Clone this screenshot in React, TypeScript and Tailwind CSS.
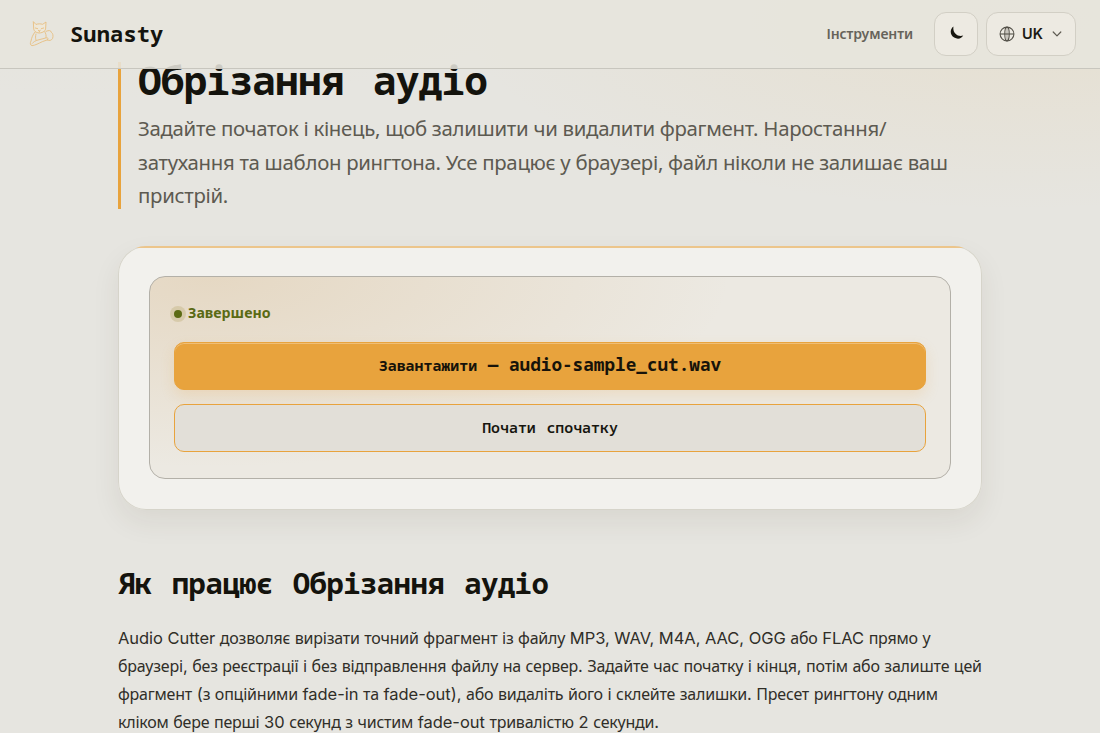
import React from "react";

/* Sets Cyrillic words in Noto Sans inside Inter text. */
function Mixed({ text }: { text: string }) {
  return (
    <>
      {text.split(/([\u0400-\u04ff]+)/).map((part, i) =>
        i % 2 ? (
          <span key={i} className="font-['Noto_Sans',sans-serif] text-[16px] tracking-[-0.22px]">
            {part}
          </span>
        ) : (
          part
        ),
      )}
    </>
  );
}

function CatLogo() {
  return (
    <svg width="28" height="30" viewBox="0 0 84 90" fill="none" stroke="#e8a33d" strokeWidth="2.6" strokeLinecap="round" strokeLinejoin="round" className="opacity-60">
      <path d="M16 9 L17 27 C17 35 22 41 34 42 C46 41 53 35 53 27 L54 9 L44 16 C38 14 30 14 25 16 Z" fill="#f4ead8" />
      <path d="M22 27 l7 2 M47 27 l-7 2 M31 34 l3 2 3-2 M34 36 v3" />
      <path d="M21 39 C14 48 11 56 9 66 C6 72 6 78 12 80 C22 79 32 73 43 68 L57 63 C64 61 60 55 53 57 L30 63 C22 65 16 69 13 73" />
      <path d="M50 38 C54 43 55 50 54 56 M54 37 C63 33 69 34 70 40 C75 43 76 50 74 58 C70 65 64 66 58 63" />
      <path d="M24 45 C22 52 22 57 24 63" />
    </svg>
  );
}

function Globe() {
  return (
    <svg width="16" height="16" viewBox="0 0 16 16" fill="none" stroke="#55524a" strokeWidth="1.1">
      <circle cx="8" cy="8" r="6.9" />
      <path d="M1 8h14" />
      <ellipse cx="8" cy="8" rx="2.2" ry="6.9" />
      <path d="M8 1v14" strokeWidth="0.5" />
    </svg>
  );
}

function Moon() {
  return (
    <svg width="14" height="14" viewBox="0 0 14 14">
      <path d="M3.5 0.5 C-0.6 3.4 0 9.4 4.2 11.6 C7.5 13.6 11.6 12.8 13.2 9.6 C8.2 11.6 2.2 7.2 3.5 0.5 Z" fill="#17160f" />
    </svg>
  );
}

function Chevron() {
  return (
    <svg width="10" height="6" viewBox="0 0 10 6" fill="none" stroke="#5d5a51" strokeWidth="1.2" strokeLinecap="round" strokeLinejoin="round" className="ml-[9px]">
      <path d="M1.2 1 L5 4.8 L8.8 1" />
    </svg>
  );
}

function Header() {
  return (
    <header className="absolute inset-x-0 top-0 z-10 flex h-[69px] items-center justify-between border-b border-[#c8c6be] bg-[#e7e5dd]/88 pr-6 pl-7">
      <div className="flex items-center gap-[14px]">
        <CatLogo />
        <span className="pb-[3px] font-['Noto_Sans_Mono','DejaVu_Sans_Mono',monospace] text-[22px] leading-7 font-bold tracking-[0.15px] text-[#14130d]">Sunasty</span>
      </div>
      <div className="flex items-center">
        <span className="mr-[21px] pb-[2px] font-['Noto_Sans',sans-serif] text-[14px] font-semibold tracking-[-0.1px] text-[#66635a]">Інструменти</span>
        <button className="mr-2 flex h-11 w-11 items-center justify-center rounded-xl border border-[#d2cfc5] bg-[#edeae2] pb-[2px] pl-[2px]">
          <Moon />
        </button>
        <button className="flex h-11 w-[90px] items-center rounded-xl border border-[#d2cfc5] bg-[#edeae2] pl-3">
          <Globe />
          <span className="ml-[7px] font-['Inter',sans-serif] text-[14.5px] font-semibold text-[#1b1a14]">UK</span>
          <Chevron />
        </button>
      </div>
    </header>
  );
}

export default function App() {
  return (
    <div className="relative h-[733px] overflow-hidden bg-[#e6e5e0] bg-[radial-gradient(ellipse_560px_190px_at_1020px_20px,rgba(228,190,120,0.15),transparent),radial-gradient(ellipse_400px_100px_at_150px_0px,rgba(228,220,170,0.08),transparent)]">
      <Header />
      <main className="mx-auto w-[864px] pt-[62px]">
        <div className="h-[147px] border-l-3 border-[#e8a33d] pl-[17px]">
          <h1 className="h-[50px] font-['Noto_Sans_Mono','DejaVu_Sans_Mono',monospace] text-[39.5px] leading-[36px] font-bold tracking-[-0.85px] [word-spacing:6.4px] text-[#14130d]">Обрізання аудіо</h1>
          <p className="font-['Noto_Sans',sans-serif] text-[20.4px] leading-[33.6px] tracking-[-0.3px] whitespace-nowrap text-[#5d5a51]">
            Задайте початок і кінець, щоб залишити чи видалити фрагмент. Наростання/
            <br />
            затухання та шаблон рингтона. Усе працює у браузері, файл ніколи не залишає ваш
            <br />
            пристрій.
          </p>
        </div>

        <section className="relative mt-[37px] h-[264px] overflow-hidden rounded-[28px] bg-[#f2f1ed] px-[31px] pt-[30px] shadow-[inset_0_0_0_1px_#d6d4ca,0_12px_28px_rgba(60,55,30,0.08)]">
          <div className="absolute inset-x-0 top-0 h-[2px] bg-[#ecc58b]" />
          <div className="h-[203px] rounded-2xl border border-[#b3b0a8] bg-[#ece9e2] bg-[radial-gradient(ellipse_520px_190px_at_60px_0px,rgba(215,180,130,0.32),transparent)] px-6 pt-[25px]">
            <div className="flex h-6 items-center gap-[6px]">
              <span className="h-2 w-2 rounded-full bg-[#5c6b14] shadow-[0_0_0_4px_rgba(160,140,60,0.22)]" />
              <span className="pb-[3px] font-['Noto_Sans',sans-serif] text-[14.2px] font-bold text-[#5a6a14]">Завершено</span>
            </div>
            <button className="mt-4 flex h-12 w-full items-center justify-center rounded-[10px] border border-[#e8a33d] bg-[#e8a33d] pb-[3px] font-['Noto_Sans_Mono','DejaVu_Sans_Mono',monospace] text-[17.7px] font-bold whitespace-pre text-[#17130a] shadow-[inset_0_1px_0_rgba(255,255,255,0.3),0_6px_14px_rgba(232,163,61,0.18)]">
              <span>
                <span className="text-[14.9px]">Завантажити</span> — audio-sample_cut.wav
              </span>
            </button>
            <button className="mt-[14px] flex h-12 w-full items-center justify-center rounded-[10px] border border-[#e8a33d] bg-[#e2dfd8] pb-[3px] font-['Noto_Sans_Mono','DejaVu_Sans_Mono',monospace] text-[17.7px] font-semibold whitespace-pre text-[#17160f]">
              <span>
                <span className="text-[14.9px]">Почати</span> <span className="text-[14.9px]">спочатку</span>
              </span>
            </button>
          </div>
        </section>

        <h2 className="mt-[53px] h-[61px] font-['Noto_Sans_Mono','DejaVu_Sans_Mono',monospace] text-[29px] leading-10 font-bold tracking-[-0.6px] [word-spacing:3.4px] text-[#14130d]">Як працює Обрізання аудіо</h2>
        <p className="font-['Inter',sans-serif] text-[16.5px] leading-7 tracking-[-0.04px] whitespace-nowrap text-[#302e28]">
          <Mixed text="Audio Cutter дозволяє вирізати точний фрагмент із файлу MP3, WAV, M4A, AAC, OGG або FLAC прямо у" />
          <br />
          <Mixed text="браузері, без реєстрації і без відправлення файлу на сервер. Задайте час початку і кінця, потім або залиште цей" />
          <br />
          <Mixed text="фрагмент (з опційними fade-in та fade-out), або видаліть його і склейте залишки. Пресет рингтону одним" />
          <br />
          <Mixed text="кліком бере перші 30 секунд з чистим fade-out тривалістю 2 секунди." />
        </p>
      </main>
    </div>
  );
}
